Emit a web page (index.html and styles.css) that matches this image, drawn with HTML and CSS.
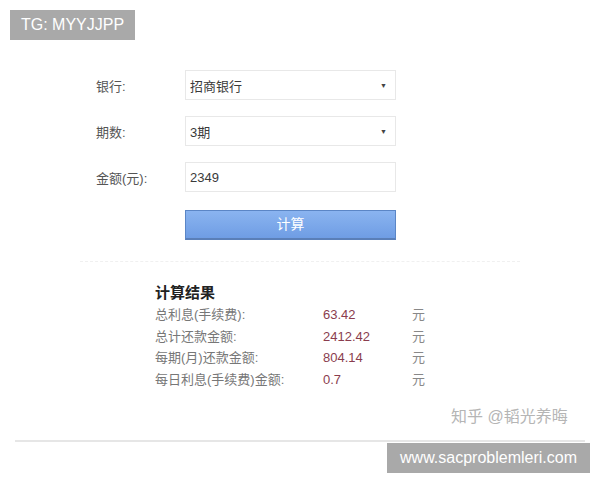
FILE: index.html
```html
<!DOCTYPE html>
<html>
<head>
<meta charset="utf-8">
<link rel="stylesheet" href="styles.css">
</head>
<body>
<div class="page">
  <div class="tg">TG: MYYJJPP</div>
  <div class="form">
    <div class="row">
      <div class="label">银行:</div>
      <div class="field select"><span>招商银行</span><span class="arrow">▼</span></div>
    </div>
    <div class="row">
      <div class="label">期数:</div>
      <div class="field select"><span>3期</span><span class="arrow">▼</span></div>
    </div>
    <div class="row">
      <div class="label">金额(元):</div>
      <div class="field"><span>2349</span></div>
    </div>
    <div class="row btnrow">
      <div class="label"></div>
      <div class="btn">计算</div>
    </div>
  </div>
  <div class="divider"></div>
  <div class="result">
    <div class="title">计算结果</div>
    <div class="rrow"><span class="rl">总利息(手续费):</span><span class="rv">63.42</span><span class="ru">元</span></div>
    <div class="rrow"><span class="rl">总计还款金额:</span><span class="rv">2412.42</span><span class="ru">元</span></div>
    <div class="rrow"><span class="rl">每期(月)还款金额:</span><span class="rv">804.14</span><span class="ru">元</span></div>
    <div class="rrow"><span class="rl">每日利息(手续费)金额:</span><span class="rv">0.7</span><span class="ru">元</span></div>
  </div>
  <div class="zhihu">知乎 @韬光养晦</div>
  <div class="bottomline"></div>
  <div class="wm-wrap"><div class="wm">www.sacproblemleri.com</div></div>
</div>
</body>
</html>
```
FILE: styles.css
```css
html, body {
  margin: 0;
  padding: 0;
  background: #fff;
  font-family: "Liberation Sans", "Noto Sans CJK SC", sans-serif;
}
.page {
  width: 600px;
  height: 480px;
  overflow: hidden;
  padding-top: 10px;
  box-sizing: border-box;
}
.tg {
  margin-left: 10px;
  width: 125px;
  height: 30px;
  background: #a9a9a9;
  color: #fff;
  font-size: 16px;
  line-height: 30px;
  text-align: center;
}
.form {
  margin-top: 30px;
  display: flex;
  flex-direction: column;
  gap: 16px;
}
.row {
  display: flex;
  align-items: center;
}
.label {
  width: 89px;
  margin-left: 96px;
  font-size: 13px;
  color: #555;
}
.field {
  width: 211px;
  height: 30px;
  box-sizing: border-box;
  border: 1px solid #e8e8e8;
  display: flex;
  align-items: center;
  justify-content: space-between;
  padding: 0 8px 0 4px;
  font-size: 13px;
  color: #3a3a3a;
}
.arrow {
  font-size: 7px;
  color: #444;
}
.btnrow {
  margin-top: 2px;
}
.btn {
  width: 211px;
  height: 30px;
  box-sizing: border-box;
  border: 1px solid #5b86c6;
  border-bottom: 2px solid #5a7fb8;
  background: linear-gradient(#8ab4f0, #6f9de4);
  color: #fff;
  font-size: 14px;
  text-align: center;
  line-height: 27px;
}
.divider {
  margin: 21px 0 0 80px;
  width: 440px;
  height: 0;
  border-top: 1px dashed #f0f0f0;
}
.result {
  margin: 20px 0 0 155px;
}
.title {
  font-size: 15px;
  font-weight: bold;
  color: #222;
  line-height: 22px;
}
.rrow {
  display: flex;
  font-size: 13px;
  line-height: 21.7px;
  color: #777;
}
.rl { width: 168px; }
.rv { width: 89px; color: #8a3d4e; }
.ru { color: #888; }
.zhihu {
  margin: 16px 0 0 451px;
  font-size: 16px;
  color: #b5b5b5;
  line-height: 19px;
}
.bottomline {
  margin: 14px 0 0 15px;
  width: 570px;
  height: 2px;
  background: #e6e6e6;
}
.wm-wrap {
  display: flex;
  justify-content: flex-end;
  padding-right: 10px;
  margin-top: 1px;
}
.wm {
  width: 203px;
  height: 30px;
  background: #a9a9a9;
  color: #fff;
  font-size: 16px;
  line-height: 30px;
  text-align: center;
}
```
